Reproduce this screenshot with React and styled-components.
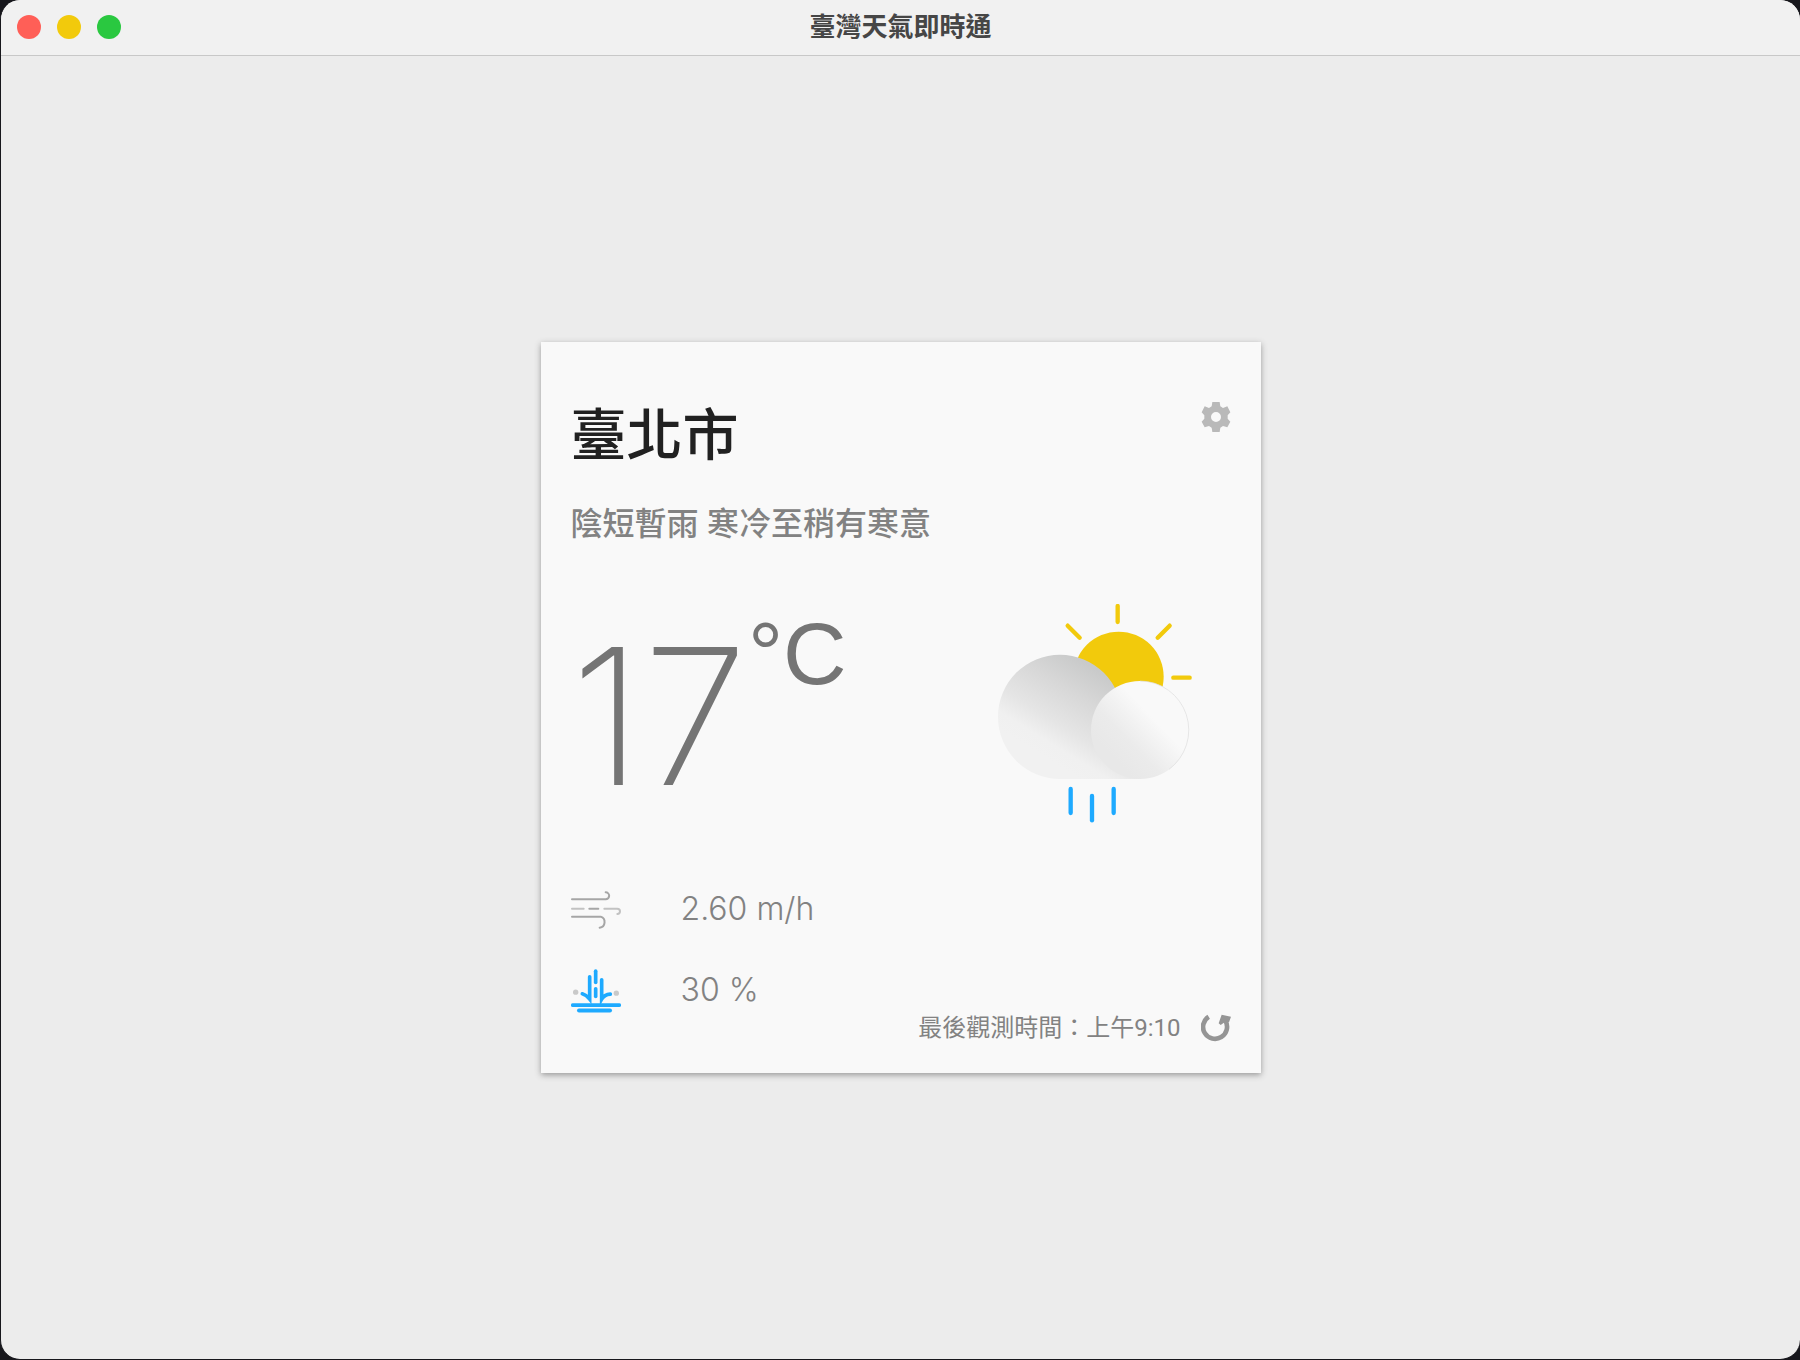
import React from 'react'
import styled, { createGlobalStyle } from 'styled-components'

const GlobalStyle = createGlobalStyle`
  * {
    box-sizing: border-box;
  }

  body {
    margin: 0;
    background: #17171c;
    font-family: Inter, "Noto Sans CJK TC", sans-serif;
  }
`

const Window = styled.div`
  display: flex;
  flex-direction: column;
  min-height: 100vh;
  overflow: hidden;
  border: solid #17171c;
  border-width: 0 0 1px 1px;
  border-radius: 20px;
  background: #ececec;
`

const TitleBar = styled.header`
  display: grid;
  grid-template-columns: 1fr auto 1fr;
  align-items: center;
  height: 56px;
  padding: 0 16px 2px;
  border-bottom: 1px solid #c8c8c8;
  background: #f1f1f1;
`

const Lights = styled.div`
  display: flex;
  gap: 16px;
`

const Light = styled.button`
  width: 24px;
  height: 24px;
  padding: 0;
  border: 0;
  border-radius: 50%;
  background: ${props => props.$color};
`

const Title = styled.h1`
  margin: 0;
  color: #464646;
  font-size: 26px;
  font-weight: 700;
  line-height: 36px;
`

const Container = styled.main`
  display: flex;
  flex: 1;
  align-items: center;
  justify-content: center;
`

const WeatherCard = styled.section`
  width: 100%;
  max-width: 720px;
  padding: 59px 30px 30px;
  background: #f9f9f9;
  box-shadow: 0 2px 6px 0 #999999;
`

const CardHeader = styled.div`
  display: flex;
  align-items: flex-start;
  justify-content: space-between;
`

const Location = styled.h2`
  margin: 0;
  color: #212121;
  font-size: 56px;
  font-weight: 500;
  line-height: 68px;
`

const IconButton = styled.button`
  display: flex;
  padding: 0;
  border: 0;
  background: none;
  color: ${props => props.$color};
  cursor: pointer;
`

const Description = styled.p`
  margin: 31px 0 56px;
  color: #828282;
  font-size: 32px;
  font-weight: 500;
  line-height: 48px;
`

const CurrentWeather = styled.div`
  display: flex;
  align-items: flex-start;
  justify-content: space-between;
  padding-right: 39px;
`

const Temperature = styled.div`
  display: flex;
  align-items: flex-start;
  color: #757575;
  font-size: 190px;
  font-weight: 200;
  line-height: 224px;
`

const Celsius = styled.span`
  font-family: "Liberation Sans", sans-serif;
  font-size: 88px;
  font-weight: 400;
  line-height: 100px;
`

const CardFooter = styled.div`
  display: flex;
  align-items: flex-end;
  justify-content: space-between;
  margin-top: 52px;
`

const Metrics = styled.dl`
  display: flex;
  flex-direction: column;
  gap: 21px;
  margin: 0 0 22px;
`

const Metric = styled.div`
  display: flex;
  align-items: center;
  height: 60px;
  color: #828282;
  font-size: 32px;
  font-weight: 300;
`

const MetricIcon = styled.dt`
  display: flex;
  width: 110px;
`

const MetricValue = styled.dd`
  margin: 0;
  padding-bottom: 4px;
`

const Refresh = styled.div`
  display: flex;
  align-items: center;
  gap: 20px;
  color: #828282;
  font-family: Roboto, "Noto Sans CJK TC", sans-serif;
  font-size: 24px;
  line-height: 30px;
`

const CogIcon = () => (
  <svg width="30" height="32" viewBox="65 63 86 96" fill="currentColor" aria-hidden="true">
    <path
      fillRule="evenodd"
      d="M97 66H119L121 79L129 84L142 79L151 97L143 106V116L151 125L142 142L129 138L121 143L119 156H97L95 143L87 138L74 142L65 125L73 116V106L65 97L74 79L87 84L95 79ZM108 96A15 15 0 1 0 108 126A15 15 0 1 0 108 96Z"
    />
  </svg>
)

const RefreshIcon = () => (
  <svg width="30" height="28" viewBox="903 99 90 84" aria-hidden="true">
    <path d="M926 107A36 36 0 1 0 976 119" fill="none" stroke="currentColor" strokeWidth="14" />
    <path d="M965 101L993 107L987 124L978 121L962 132L956 127Z" fill="currentColor" />
  </svg>
)

const DayRainIcon = () => (
  <svg width="194" height="219" viewBox="54 42 582 657" role="img" aria-label="陰短暫雨">
    <defs>
      <linearGradient id="cloudBack" gradientUnits="userSpaceOnUse" x1="350" y1="240" x2="190" y2="500">
        <stop offset="0" stopColor="#c9caca" />
        <stop offset="0.3" stopColor="#d7d7d7" />
        <stop offset="0.65" stopColor="#e5e5e5" />
        <stop offset="0.85" stopColor="#f0f0f0" />
        <stop offset="1" stopColor="#f1f1f1" />
      </linearGradient>
      <linearGradient id="cloudFront" gradientUnits="userSpaceOnUse" x1="400" y1="500" x2="520" y2="385">
        <stop offset="0" stopColor="#e8e8e8" />
        <stop offset="0.4" stopColor="#ebebeb" />
        <stop offset="0.75" stopColor="#f3f3f3" />
        <stop offset="1" stopColor="#f9f9f9" />
      </linearGradient>
    </defs>
    <g stroke="#f2ca0c" strokeWidth="13" strokeLinecap="round">
      <path d="M413 48V96" />
      <path d="M263 107L299 143" />
      <path d="M569 107L533 143" />
      <path d="M580 263H629" />
    </g>
    <circle cx="416" cy="260" r="135" fill="#f2ca0c" />
    <path
      d="M240 194A186 186 0 0 0 54 380A186 187 0 0 0 240 567H480V420L426 380A186 186 0 0 0 240 194Z"
      fill="url(#cloudBack)"
    />
    <circle cx="480" cy="420" r="147" fill="url(#cloudFront)" />
    <path d="M480 273A147 147 0 0 1 567 538" fill="none" stroke="#dcdcdc" strokeWidth="2" />
    <g stroke="#1eaaff" strokeWidth="13" strokeLinecap="round">
      <path d="M272 597V669" />
      <path d="M336 618V691" />
      <path d="M401 597V669" />
    </g>
  </svg>
)

const AirFlowIcon = () => (
  <svg width="50" height="38" viewBox="33 62 150 114" fill="none" strokeLinecap="round" aria-hidden="true">
    <g stroke="#a6a6a6" strokeWidth="6">
      <path d="M36 87H137A10 10 0 0 0 137 66" />
      <path d="M36 139H122A17 17 0 0 1 119 172" />
      <path d="M88 115H115" />
    </g>
    <g stroke="#c2c2c2" strokeWidth="6">
      <path d="M36 115H71" />
      <path d="M133 115H172A8 8 0 0 1 172 131" />
    </g>
  </svg>
)

const RainIcon = () => (
  <svg width="50" height="44" viewBox="33 296 150 131" fill="none" strokeLinecap="round" aria-hidden="true">
    <circle cx="47" cy="365" r="8" fill="#c9c9c9" />
    <circle cx="169" cy="368" r="8" fill="#c9c9c9" />
    <g stroke="#1eaaff" strokeWidth="11">
      <path d="M107 302V336" />
      <path d="M107 355V378" />
      <path d="M89 319V386Q78 373 67 370" />
      <path d="M125 328V386Q133 372 151 371" />
      <path d="M38 404H178" />
      <path d="M57 420H150" strokeWidth="12" />
    </g>
  </svg>
)

export default class App extends React.Component {
  render () {
    return (
      <>
        <GlobalStyle />
        <Window>
          <TitleBar>
            <Lights>
              <Light $color="#ff5f57" aria-label="關閉" />
              <Light $color="#f2ca0c" aria-label="最小化" />
              <Light $color="#2ac840" aria-label="縮放" />
            </Lights>
            <Title>臺灣天氣即時通</Title>
          </TitleBar>

          <Container>
            <WeatherCard>
              <CardHeader>
                <Location>臺北市</Location>
                <IconButton $color="#b9b9b9" aria-label="設定">
                  <CogIcon />
                </IconButton>
              </CardHeader>
              <Description>陰短暫雨 寒冷至稍有寒意</Description>

              <CurrentWeather>
                <Temperature>
                  17<Celsius>°C</Celsius>
                </Temperature>
                <DayRainIcon />
              </CurrentWeather>

              <CardFooter>
                <Metrics>
                  <Metric>
                    <MetricIcon aria-label="風速"><AirFlowIcon /></MetricIcon>
                    <MetricValue>2.60 m/h</MetricValue>
                  </Metric>
                  <Metric>
                    <MetricIcon aria-label="降雨機率"><RainIcon /></MetricIcon>
                    <MetricValue>30 %</MetricValue>
                  </Metric>
                </Metrics>
                <Refresh>
                  最後觀測時間：上午9:10
                  <IconButton $color="#959595" aria-label="重新整理">
                    <RefreshIcon />
                  </IconButton>
                </Refresh>
              </CardFooter>
            </WeatherCard>
          </Container>
        </Window>
      </>
    )
  }
}
